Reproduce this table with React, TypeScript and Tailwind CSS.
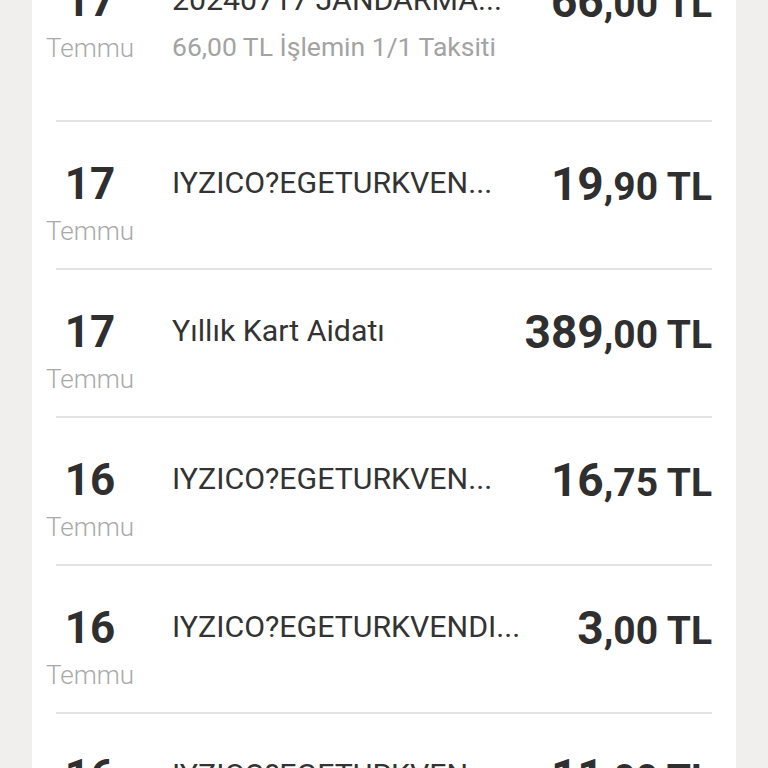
import React from 'react';

interface Txn {
  day: string;
  month: string;
  title: string;
  sub?: string;
  whole: string;
  cents: string;
}

const txns: Txn[] = [
  { day: '17', month: 'Temmu', title: '20240717 JANDARMA...', sub: '66,00 TL İşlemin 1/1 Taksiti', whole: '66', cents: ',00 TL' },
  { day: '17', month: 'Temmu', title: 'IYZICO?EGETURKVEN...', whole: '19', cents: ',90 TL' },
  { day: '17', month: 'Temmu', title: 'Yıllık Kart Aidatı', whole: '389', cents: ',00 TL' },
  { day: '16', month: 'Temmu', title: 'IYZICO?EGETURKVEN...', whole: '16', cents: ',75 TL' },
  { day: '16', month: 'Temmu', title: 'IYZICO?EGETURKVENDI...', whole: '3', cents: ',00 TL' },
  { day: '16', month: 'Temmu', title: 'IYZICO?EGETURKVEN...', whole: '11', cents: ',00 TL' },
];

const Row: React.FC<{ t: Txn }> = ({ t }) => (
  <div className="flex items-start pt-[38px] pb-[21px]">
    {/* date */}
    <div className="w-[116px] shrink-0 flex flex-col items-center">
      <span className="text-[44px] leading-[48px] font-bold text-[#2f2f2f]">{t.day}</span>
      <span className="mt-[7px] text-[26px] leading-[32px] font-light text-[#a9a9a9]">{t.month}</span>
    </div>

    {/* description */}
    <div className={`ml-6 flex-1 min-w-0 mt-[5px] ${t.sub ? 'mb-[36px]' : ''}`}>
      <div className="text-[30.3px] leading-[36px] text-[#333] whitespace-nowrap overflow-hidden">{t.title}</div>
      {t.sub && (
        <div className="mt-[13px] text-[26.5px] leading-[32px] text-[#a3a3a3] whitespace-nowrap overflow-hidden">{t.sub}</div>
      )}
    </div>

    {/* amount */}
    <div className="shrink-0 pr-6 pl-4 text-[46px] leading-[48px] font-bold text-[#2f2f2f] whitespace-nowrap">
      {t.whole}
      <span className="text-[39px] leading-none">{t.cents}</span>
    </div>
  </div>
);

export default function App() {
  return (
    <div className="h-[768px] overflow-hidden bg-[#f0efed] px-8" style={{ fontFamily: 'Roboto, "Noto Sans", sans-serif' }}>
      <div className="bg-white h-full flex flex-col">
        <div className="-mt-[61px]">
          {txns.map((t, i) => (
            <React.Fragment key={i}>
              <Row t={t} />
              {i < txns.length - 1 && <div className="mx-6 h-[2px] bg-[#e2e2e2]" />}
            </React.Fragment>
          ))}
        </div>
      </div>
    </div>
  );
}
